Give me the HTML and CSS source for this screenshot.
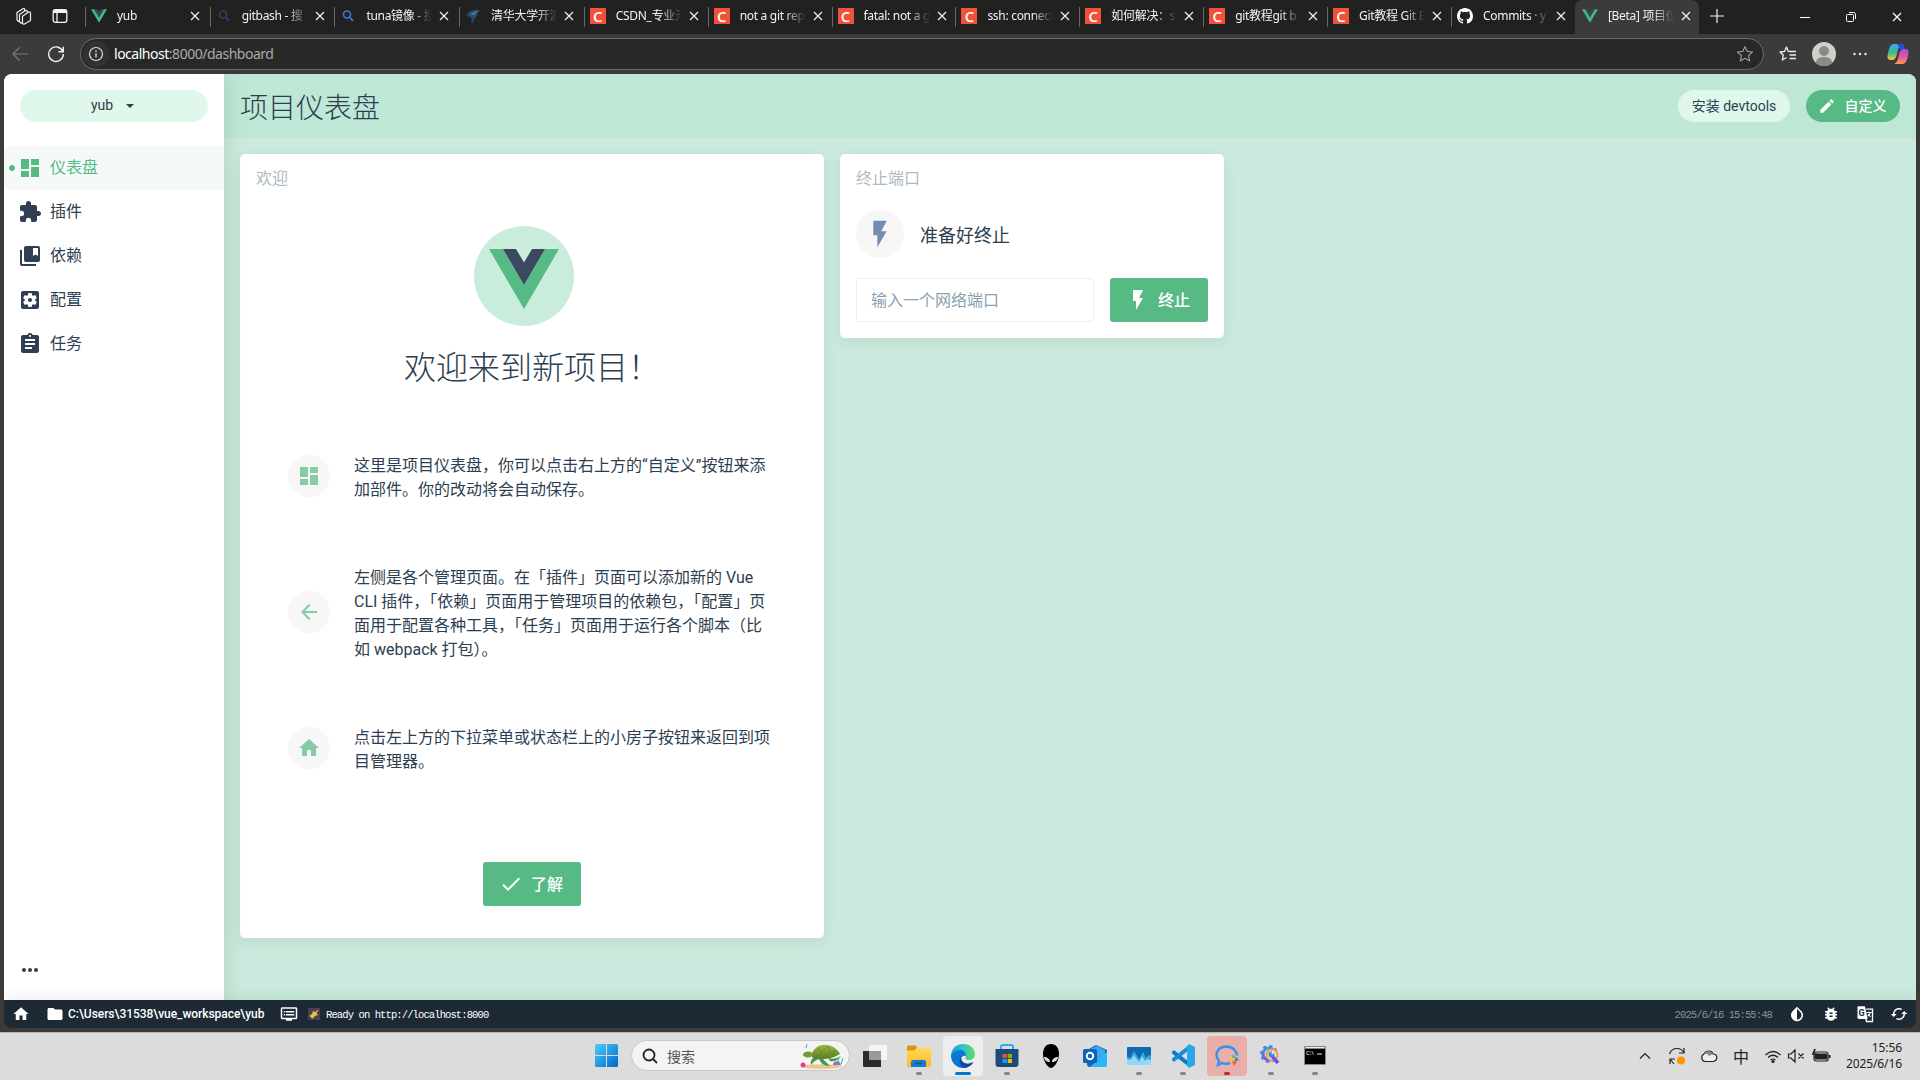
FILE: index.html
```html
<!DOCTYPE html>
<html lang="zh-CN">
<head>
<meta charset="utf-8">
<title>[Beta] 项目仪表盘 - Vue CLI</title>
<link rel="stylesheet" href="styles.css">
</head>
<body>
<svg class="defs" width="0" height="0">
  <defs>
    <linearGradient id="gWin" x1="0" y1="0" x2="1" y2="1"><stop offset="0" stop-color="#4ccdfb"/><stop offset="1" stop-color="#0067c9"/></linearGradient>
    <linearGradient id="gEdge" x1="0" y1="0" x2="1" y2="0"><stop offset="0" stop-color="#1a9be0"/><stop offset=".5" stop-color="#2cc5c8"/><stop offset="1" stop-color="#64dd5b"/></linearGradient>
    <linearGradient id="gCop" x1="0" y1="0" x2="0" y2="1"><stop offset="0" stop-color="#35a8f5"/><stop offset=".55" stop-color="#3fb78e"/><stop offset="1" stop-color="#f3cf2c"/></linearGradient>
    <linearGradient id="gCop2" x1="0" y1="0" x2="0" y2="1"><stop offset="0" stop-color="#9a55ee"/><stop offset=".5" stop-color="#e255a0"/><stop offset="1" stop-color="#ff9a4a"/></linearGradient>
    <linearGradient id="gFold" x1="0" y1="0" x2="0" y2="1"><stop offset="0" stop-color="#ffd95a"/><stop offset="1" stop-color="#fbb923"/></linearGradient>
    <linearGradient id="gGear" x1="0" y1="0" x2="0" y2="1"><stop offset="0" stop-color="#28a6d8"/><stop offset="1" stop-color="#7d4bf0"/></linearGradient>
    <linearGradient id="gShell" x1="0" y1="0" x2="0" y2="1"><stop offset="0" stop-color="#9fbb3c"/><stop offset="1" stop-color="#567a2b"/></linearGradient>
  </defs>
  <symbol id="vue" viewBox="0 0 70 60"><path fill="#57ba85" d="M0 0h14l21 36L56 0h14L35 60z"/><path fill="#3b4960" d="M14 0h13l8 13.500L43 0h13L35 36z"/></symbol>
  <symbol id="vuetab" viewBox="0 0 70 60"><path fill="#42b883" d="M0 0h14l21 36L56 0h14L35 60z"/><path fill="#35495e" d="M14 0h13l8 13.500L43 0h13L35 36z"/></symbol>
  <symbol id="x" viewBox="0 0 10 10"><path d="M1 1l8 8M9 1L1 9" fill="none" stroke="currentColor" stroke-width="1.200"/></symbol>
  <symbol id="mag" viewBox="0 0 16 16"><circle cx="7" cy="6.500" r="3.500" fill="none" stroke="currentColor" stroke-width="1.600"/><path d="M9.500 9L13 13" stroke="currentColor" stroke-width="1.800"/></symbol>
  <symbol id="dashboard" viewBox="0 0 24 24"><path d="M3 13h8V3H3v10zm0 8h8v-6H3v6zm10 0h8V11h-8v10zm0-18v6h8V3h-8z"/></symbol>
  <symbol id="extension" viewBox="0 0 24 24"><path d="M20.500 11H19V7c0-1.100-.9-2-2-2h-4V3.500C13 2.120 11.880 1 10.500 1S8 2.120 8 3.500V5H4c-1.100 0-1.990.9-1.990 2v3.800H3.500c1.490 0 2.700 1.210 2.700 2.700s-1.210 2.700-2.700 2.700H2V20c0 1.100.9 2 2 2h3.800v-1.500c0-1.490 1.210-2.700 2.700-2.700 1.490 0 2.700 1.210 2.700 2.700V22H17c1.100 0 2-.9 2-2v-4h1.500c1.380 0 2.500-1.120 2.500-2.500S21.880 11 20.500 11z"/></symbol>
  <symbol id="books" viewBox="0 0 24 24"><path d="M4 6H2v14c0 1.100.9 2 2 2h14v-2H4V6z"/><path d="M20 2H8c-1.100 0-2 .9-2 2v12c0 1.100.9 2 2 2h12c1.100 0 2-.9 2-2V4c0-1.100-.9-2-2-2zm0 10l-2.500-1.500L15 12V4h5v8z"/></symbol>
  <symbol id="settings" viewBox="0 0 24 24"><path d="M12 10c-1.100 0-2 .9-2 2s.9 2 2 2 2-.9 2-2-.9-2-2-2zm7-7H5c-1.110 0-2 .9-2 2v14c0 1.100.89 2 2 2h14c1.110 0 2-.9 2-2V5c0-1.100-.89-2-2-2zm-1.750 9c0 .23-.02.46-.05.68l1.480 1.160c.13.11.17.3.08.45l-1.400 2.420c-.09.15-.27.21-.43.15l-1.740-.7c-.36.28-.76.51-1.180.69l-.26 1.850c-.03.17-.18.3-.35.3h-2.800c-.17 0-.32-.13-.35-.29l-.26-1.850c-.43-.18-.82-.41-1.180-.69l-1.740.7c-.16.06-.34 0-.43-.15l-1.400-2.420c-.09-.15-.05-.34.08-.45l1.480-1.160c-.03-.23-.05-.46-.05-.69 0-.23.02-.46.05-.68l-1.480-1.160c-.13-.11-.17-.3-.08-.45l1.400-2.420c.09-.15.27-.21.43-.15l1.740.7c.36-.28.76-.51 1.180-.69l.26-1.850c.03-.17.18-.3.35-.3h2.800c.17 0 .32.13.35.29l.26 1.850c.43.18.82.41 1.180.69l1.740-.7c.16-.06.34 0 .43.15l1.400 2.420c.09.15.05.34-.08.45l-1.480 1.160c.03.23.05.46.05.69z"/></symbol>
  <symbol id="task" viewBox="0 0 24 24"><path d="M19 3h-4.180C14.400 1.840 13.300 1 12 1c-1.300 0-2.400.84-2.820 2H5c-1.100 0-2 .9-2 2v14c0 1.100.9 2 2 2h14c1.100 0 2-.9 2-2V5c0-1.100-.9-2-2-2zm-7 0c.55 0 1 .45 1 1s-.45 1-1 1-1-.45-1-1 .45-1 1-1zm2 14H7v-2h7v2zm3-4H7v-2h10v2zm0-4H7V7h10v2z"/></symbol>
  <symbol id="bolt" viewBox="0 0 24 24"><path d="M7 2v11h3v9l7-12h-4l4-8z"/></symbol>
  <symbol id="edit" viewBox="0 0 24 24"><path d="M3 17.250V21h3.750L17.810 9.940l-3.750-3.750L3 17.250zM20.710 7.040c.39-.39.39-1.020 0-1.410l-2.340-2.340c-.39-.39-1.020-.39-1.410 0l-1.830 1.830 3.750 3.750 1.830-1.830z"/></symbol>
  <symbol id="home" viewBox="0 0 24 24"><path d="M10 20v-6h4v6h5v-8h3L12 3 2 12h3v8z"/></symbol>
  <symbol id="back" viewBox="0 0 24 24"><path d="M20 11H7.830l5.590-5.590L12 4l-8 8 8 8 1.410-1.410L7.830 13H20v-2z"/></symbol>
  <symbol id="check" viewBox="0 0 24 24"><path d="M9 16.170L4.830 12l-1.420 1.410L9 19 21 7l-1.410-1.410z"/></symbol>
  <symbol id="folder" viewBox="0 0 24 24"><path d="M10 4H4c-1.100 0-1.990.9-1.990 2L2 18c0 1.100.9 2 2 2h16c1.100 0 2-.9 2-2V8c0-1.100-.9-2-2-2h-8l-2-2z"/></symbol>
  <symbol id="dvr" viewBox="0 0 24 24"><path d="M21 3H3c-1.100 0-2 .9-2 2v12c0 1.100.9 2 2 2h5v2h8v-2h5c1.100 0 1.990-.9 1.990-2L23 5c0-1.100-.9-2-2-2zm0 14H3V5h18v12zm-2-9H8v2h11V8zm0 4H8v2h11v-2zM7 8H5v2h2V8zm0 4H5v2h2v-2z"/></symbol>
  <symbol id="invert" viewBox="0 0 24 24"><path transform="matrix(-1 0 0 1 24 0)" d="M17.660 7.930L12 2.270 6.340 7.930c-3.120 3.120-3.120 8.190 0 11.310C7.900 20.800 9.950 21.580 12 21.580s4.100-.78 5.660-2.340c3.120-3.120 3.120-8.190 0-11.310zM12 19.590c-1.600 0-3.110-.62-4.240-1.760C6.620 16.690 6 15.190 6 13.590s.62-3.110 1.760-4.240L12 5.100v14.490z"/></symbol>
  <symbol id="bug" viewBox="0 0 24 24"><path d="M20 8h-2.810c-.45-.78-1.070-1.450-1.820-1.960L17 4.410 15.590 3l-2.170 2.170C12.960 5.060 12.490 5 12 5c-.49 0-.96.06-1.410.17L8.410 3 7 4.410l1.620 1.630C7.880 6.550 7.260 7.220 6.810 8H4v2h2.090c-.05.33-.09.66-.09 1v1H4v2h2v1c0 .34.04.67.09 1H4v2h2.810c1.040 1.790 2.970 3 5.190 3s4.150-1.210 5.190-3H20v-2h-2.090c.05-.33.09-.66.09-1v-1h2v-2h-2v-1c0-.34-.04-.67-.09-1H20V8zm-6 8h-4v-2h4v2zm0-4h-4v-2h4v2z"/></symbol>
  <symbol id="cached" viewBox="0 0 24 24"><path d="M19 8l-4 4h3c0 3.310-2.690 6-6 6-1.010 0-1.970-.25-2.800-.7l-1.460 1.460C8.970 19.540 10.430 20 12 20c4.420 0 8-3.580 8-8h3l-4-4zM6 12c0-3.310 2.690-6 6-6 1.010 0 1.970.25 2.800.7l1.460-1.460C15.030 4.460 13.570 4 12 4c-4.420 0-8 3.580-8 8H1l4 4 4-4H6z"/></symbol>
  <symbol id="star" viewBox="0 0 18 18"><path d="M9 1.500l2.200 4.900 5.300.6-4 3.600 1.200 5.300L9 13.200l-4.700 2.700 1.200-5.300-4-3.600 5.300-.6z" fill="none" stroke="currentColor" stroke-width="1.200" stroke-linejoin="round"/></symbol>
</svg>

<header class="tabs">
  <div class="tab-tools">
    <svg width="18" height="18" viewBox="0 0 18 18" fill="#212121" stroke="#f0f0f0" stroke-width="1.200" stroke-linejoin="round"><path d="M2 5.500l6-3.800c1-.6 1.700 0 1.700 1v8L3.500 14.500 2 12.800z"/><path d="M4.500 7.500l6-4c1-.6 1.800 0 1.800 1v8.200l-6.200 3.600-1.600-1.500z"/><path d="M7.500 9.200l6.200-4.200c1-.6 1.800.2 1.800 1v7.500l-6 3.500c-1 .5-2 0-2-1z"/></svg>
    <svg width="16" height="16" viewBox="0 0 16 16" fill="none" stroke="#f3f3f3" stroke-width="1.300"><rect x="1.200" y="1.700" width="13.600" height="12.600" rx="2"/><path d="M5 5v9"/><path d="M1.500 3.500h13" stroke-width="3"/></svg>
  </div>
  <div class="tab wide"><svg class="fav"><use href="#vuetab"/></svg><span>yub</span><svg class="close"><use href="#x"/></svg></div>
  <div class="tab wide"><svg class="fav dim"><use href="#mag"/></svg><span>gitbash - 搜</span><svg class="close"><use href="#x"/></svg></div>
  <div class="tab wide"><svg class="fav blue"><use href="#mag"/></svg><span>tuna镜像 - 搜</span><svg class="close"><use href="#x"/></svg></div>
  <div class="tab wide"><svg class="fav" viewBox="0 0 16 16"><path fill="#2c4964" d="M1 8C3 3 9 1 15 2l-3 4c1 3-2 3-3 6l-2 4c-1-3 0-5-1-7z"/><path fill="#387d91" d="M5 7c2-3 5-4 8-4-2 2-2 3-4 4z"/></svg><span>清华大学开源</span><svg class="close"><use href="#x"/></svg></div>
  <div class="tab"><b class="fav csdn">C</b><span>CSDN_专业开</span><svg class="close"><use href="#x"/></svg></div>
  <div class="tab"><b class="fav csdn">C</b><span>not a git rep</span><svg class="close"><use href="#x"/></svg></div>
  <div class="tab"><b class="fav csdn">C</b><span>fatal: not a g</span><svg class="close"><use href="#x"/></svg></div>
  <div class="tab"><b class="fav csdn">C</b><span>ssh: connect</span><svg class="close"><use href="#x"/></svg></div>
  <div class="tab"><b class="fav csdn">C</b><span>如何解决：s</span><svg class="close"><use href="#x"/></svg></div>
  <div class="tab"><b class="fav csdn">C</b><span>git教程git b</span><svg class="close"><use href="#x"/></svg></div>
  <div class="tab"><b class="fav csdn">C</b><span>Git教程 Git B</span><svg class="close"><use href="#x"/></svg></div>
  <div class="tab"><svg class="fav" viewBox="0 0 16 16"><path fill="#fff" d="M8 0C3.580 0 0 3.580 0 8c0 3.540 2.290 6.530 5.470 7.590.4.070.55-.17.55-.38 0-.19-.01-.82-.01-1.490-2.010.37-2.530-.49-2.690-.94-.09-.23-.48-.94-.82-1.130-.28-.15-.68-.52-.01-.53.63-.01 1.080.58 1.230.82.72 1.210 1.870.87 2.330.66.07-.52.28-.87.51-1.070-1.780-.2-3.640-.89-3.640-3.950 0-.87.31-1.590.82-2.150-.08-.2-.36-1.020.08-2.120 0 0 .67-.21 2.200.82a7.600 7.600 0 014 0c1.530-1.040 2.200-.82 2.200-.82.44 1.100.16 1.920.08 2.120.51.56.82 1.270.82 2.150 0 3.070-1.870 3.750-3.650 3.950.29.25.54.73.54 1.480 0 1.070-.01 1.930-.01 2.200 0 .21.15.46.55.38A8 8 0 0016 8c0-4.420-3.580-8-8-8z"/></svg><span>Commits · y</span><svg class="close"><use href="#x"/></svg></div>
  <div class="tab active"><svg class="fav"><use href="#vuetab"/></svg><span>[Beta] 项目仪</span><svg class="close"><use href="#x"/></svg></div>
  <svg class="plus" viewBox="0 0 14 14"><path d="M7 0v14M0 7h14" stroke="#eee" stroke-width="1.200"/></svg>
  <div class="win">
    <svg viewBox="0 0 10 10"><path d="M0 5.500h10" stroke="#fff"/></svg>
    <svg viewBox="0 0 10 10" fill="none" stroke="#fff"><rect x=".5" y="2.500" width="7" height="7" rx="1"/><path d="M3 .5h4.500a2 2 0 012 2V7"/></svg>
    <svg viewBox="0 0 10 10"><use href="#x"/></svg>
  </div>
</header>

<div class="toolbar">
  <svg class="nav" viewBox="0 0 18 18" fill="none" stroke="#7d7d7d" stroke-width="1.200"><path d="M17 9H2M8.500 2.500L2 9l6.500 6.500"/></svg>
  <svg class="nav" viewBox="0 0 18 18" fill="none" stroke="#eee" stroke-width="1.400"><path d="M15.800 6.500A7.300 7.300 0 1016.300 9M16.300 1.800v4.900h-4.900"/></svg>
  <div class="address">
    <i class="info"><svg width="16" height="16" viewBox="0 0 16 16" fill="none" stroke="#ddd"><circle cx="8" cy="8" r="6.500" stroke-width="1.200"/><path d="M8 7.200v4M8 4.600v1.400" stroke-width="1.400"/></svg></i>
    <p>localhost<em>:8000/dashboard</em></p>
    <svg class="star"><use href="#star"/></svg>
  </div>
  <div class="tools">
    <svg viewBox="0 0 18 18" fill="none" stroke="#eee" stroke-width="1.300" stroke-linejoin="round"><path d="M9.500 7L7.500 2 5.500 6.500 1 7l3.300 3.200L3.300 15l4.200-2.500M10 6.500h7M10.500 10H17M10.500 13.500H17"/></svg>
    <svg class="user" viewBox="0 0 24 24"><circle cx="12" cy="12" r="12" fill="#d1cfcc"/><circle cx="12" cy="9" r="5" fill="#8c8a87"/><path d="M4 21c0-4 3-6 8-6s8 2 8 6a12 12 0 01-16 0z" fill="#8c8a87"/></svg>
    <svg viewBox="0 0 18 18" fill="#eee"><circle cx="3.500" cy="9" r="1.200"/><circle cx="9" cy="9" r="1.200"/><circle cx="14.500" cy="9" r="1.200"/></svg>
    <svg class="user" viewBox="0 0 24 24"><path fill="url(#gCop)" d="M8 2h8c-3 1-4 5-5 10-1 4-2 6-6 6-4 0-4-3-3-7S4 2 8 2z"/><path fill="#274fd0" d="M11 2h5c2 0 2.500 2 3 5h-4c-2 0-2-3-4-5z"/><path fill="url(#gCop2)" d="M16 22H8c3-1 4-5 5-10 1-4 2-5 6-5 4 0 4 3 3 7s-2 8-6 8z"/></svg>
  </div>
</div>

<div class="frame">
<div class="page">
  <div class="app">
    <aside class="side">
      <div class="project">yub<i></i></div>
      <nav>
        <a class="on"><svg><use href="#dashboard"/></svg>仪表盘</a>
        <a><svg><use href="#extension"/></svg>插件</a>
        <a><svg><use href="#books"/></svg>依赖</a>
        <a><svg><use href="#settings"/></svg>配置</a>
        <a><svg><use href="#task"/></svg>任务</a>
      </nav>
      <svg class="more" viewBox="0 0 24 24"><circle cx="6" cy="12" r="2"/><circle cx="12" cy="12" r="2"/><circle cx="18" cy="12" r="2"/></svg>
    </aside>
    <main>
      <div class="head">
        <h1>项目仪表盘</h1>
        <button class="pill">安装 devtools</button>
        <button class="pill primary"><svg><use href="#edit"/></svg>自定义</button>
      </div>
      <div class="widgets">
        <section class="card welcome">
          <h2>欢迎</h2>
          <div class="logo"><svg><use href="#vue"/></svg></div>
          <h3>欢迎来到新项目！</h3>
          <div class="tips">
            <div class="tip two"><i><svg><use href="#dashboard"/></svg></i><p>这里是项目仪表盘，你可以点击右上方的“自定义”按钮来添<br>加部件。你的改动将会自动保存。</p></div>
            <div class="tip four"><i><svg><use href="#back"/></svg></i><p>左侧是各个管理页面。在「插件」页面可以添加新的 Vue<br>CLI 插件，「依赖」页面用于管理项目的依赖包，「配置」页<br>面用于配置各种工具，「任务」页面用于运行各个脚本（比<br>如 webpack 打包）。</p></div>
            <div class="tip two"><i><svg><use href="#home"/></svg></i><p>点击左上方的下拉菜单或状态栏上的小房子按钮来返回到项<br>目管理器。</p></div>
          </div>
          <button class="btn"><svg><use href="#check"/></svg>了解</button>
        </section>
        <section class="card kill">
          <h2>终止端口</h2>
          <div class="ready"><i><svg><use href="#bolt"/></svg></i>准备好终止</div>
          <div class="port"><input placeholder="输入一个网络端口"><button class="btn"><svg><use href="#bolt"/></svg>终止</button></div>
        </section>
      </div>
    </main>
  </div>
  <footer class="status">
    <svg class="s-home"><use href="#home"/></svg>
    <svg class="s-folder"><use href="#folder"/></svg>
    <b>C:\Users\31538\vue_workspace\yub</b>
    <svg class="s-log"><use href="#dvr"/></svg>
    <svg class="s-spark" viewBox="0 0 12 12"><rect width="12" height="12" fill="#4a3f52"/><path d="M11 1L8.500 5 10 7 7 8l-3 3-1-2-2-1 3-2 1-3 2 1z" fill="#e9c23c"/></svg>
    <code>Ready on http://localhost:8000</code>
    <time>2025/6/16 15:55:48</time>
    <div class="s-tools">
      <svg><use href="#invert"/></svg>
      <svg><use href="#bug"/></svg>
      <svg viewBox="0 0 24 24"><path d="M3 1.500h9l3.500 17H4a2 2 0 01-2-2v-14z"/><path d="M13.500 5.500H22V22h-8l-1-4" fill="none" stroke="#fff" stroke-width="1.800"/><path d="M14 10h7M17.500 8.500V10M19 10c0 2-2 4-3.500 5M16 12l3.500 4" fill="none" stroke="#fff" stroke-width="1.400"/><text x="3.200" y="14.500" font-size="12" font-weight="700" fill="#1d2935">G</text></svg>
      <svg><use href="#cached"/></svg>
    </div>
  </footer>
</div>
</div>

<div class="taskbar">
  <div class="apps">
    <svg class="start" viewBox="0 0 23 23" fill="url(#gWin)"><path d="M0 1.500Q0 0 1.500 0H11v11H0zM12 0h9.500Q23 0 23 1.500V11H12zM0 12h11v11H1.500Q0 23 0 21.500zM12 12h11v9.500q0 1.500-1.500 1.500H12z"/></svg>
    <div class="search">
      <svg width="16" height="16" viewBox="0 0 16 16" fill="none" stroke="#222" stroke-width="1.800"><circle cx="7" cy="7" r="5.500"/><path d="M11 11l4 4"/></svg>
      <span>搜索</span>
      <svg width="44" height="26" viewBox="0 0 44 26"><ellipse cx="22" cy="23.500" rx="20" ry="2.300" fill="#f0c48d"/><path d="M28 15c4 1 8 1 13-2-2 4-7 6-11 5zM12 12c3 3 8 3 11 4l7 7c-7 0-9-3-11-7-3 1-6 3-8 6-1-4 1-6 3-8z" fill="#3f9c55"/><path d="M11 12c3-7 8-11 16-10 7 1 11 5 13 9-8 5-18 6-27 4z" fill="url(#gShell)"/><path d="M18 5l4 4 6-6 3 7 5-3M22 9l-3 6M31 10l-2 6" stroke="#6d8e2d" fill="none"/><ellipse cx="8" cy="11.500" rx="5" ry="3" fill="#719c36"/><circle cx="3" cy="22" r="2.500" fill="#e43f9c"/><path d="M33 22c0-5 7-5 8 0z" fill="#9a6ac8"/><path d="M39 21l-1-5M41 21l2-6M6 5l1-4" stroke="#36b49b"/></svg>
    </div>
    <div class="app-icon"><svg viewBox="0 0 24 24"><rect x="6" y="1" width="18" height="15" rx="1" fill="#f5f5f5"/><path d="M0 7h18v16H1.500Q0 23 0 21.500z" fill="#2b2b2b"/><path d="M6 7h12v9H6z" fill="#999"/></svg></div>
    <div class="app-icon run"><svg viewBox="0 0 24 24"><path d="M0 3q0-1.500 1.500-1.500h7L10 4v3H0z" fill="#d9950b"/><path d="M0 6.500h7L10 4h13q1 0 1 1v16q0 2-2 2H2q-2 0-2-2z" fill="url(#gFold)"/><path d="M4 23v-5q0-2 2-2h11q2 0 2 2v5z" fill="#1779c9"/><path d="M8 19.500h7" stroke="#0a559a" stroke-width="1.500"/></svg></div>
    <div class="app-icon run current"><svg viewBox="0 0 24 24"><path d="M0 12C0 5 5 0 12 0c8 0 12 6 12 10 0 4-3 6-6 6-4 0-4-2-3-3 0-4-3-5-6-5-4 0-7 2-9 5z" fill="url(#gEdge)"/><path d="M0 12c2-4 5-6 9-6 4 0 6 3 6 6-1-1-5 0-5 3 0 4 5 7 12 3-2 4-6 6-10 6C5 24 0 18 0 12z" fill="#0a78d4"/><path d="M10 13c-3 4-1 10 4 11 4-1 7-3 8.500-6C15 22 10 18 10 13z" fill="#104a98"/></svg></div>
    <div class="app-icon run"><svg viewBox="0 0 24 24"><path d="M6 6V3q0-2 2-2h8q2 0 2 2v3" fill="none" stroke="#27aee8" stroke-width="2"/><path d="M.5 5h23v15q0 3-3 3h-17q-3 0-3-3z" fill="#1c4c7d"/><path fill="#f25022" d="M7.500 10H12v4H7.500z"/><path fill="#7fba00" d="M12.800 10H17v4h-4.200z"/><path fill="#00a4ef" d="M7.500 15H12v4H7.500z"/><path fill="#ffb900" d="M12.800 15H17v4h-4.200z"/></svg></div>
    <div class="app-icon"><svg viewBox="0 0 24 24"><path d="M12 0c5 0 8 4 8 10 0 7-5 14-8 14S4 17 4 10C4 4 7 0 12 0z"/><path d="M5 13c3 0 6 2 6 5-3 0-6-2-6-5zM19 13c-3 0-6 2-6 5 3 0 6-2 6-5z" fill="#ddd"/></svg></div>
    <div class="app-icon"><svg viewBox="0 0 24 24"><path d="M4 6l9-5 11 5v14q0 3-3 3H7q-3 0-3-3z" fill="#1565b9"/><path d="M7 5l7-3 8 4v7l-8 4-7-5z" fill="#38a8ef"/><path d="M24 8v13q0 2-2 2H7z" fill="#29b8f3"/><rect y="5" width="14" height="14" rx="1.500" fill="#0b63bd"/><circle cx="7" cy="12" r="3.200" fill="none" stroke="#fff" stroke-width="2"/></svg></div>
    <div class="app-icon run"><svg viewBox="0 0 24 24"><rect y="3" width="24" height="18" rx="1" fill="#91d8fa"/><path d="M0 4q0-1 1-1h22q1 0 1 1v9l-3-1-2 3-3-6-4 7-4-7-4 6-4-2z" fill="#0f6bb0"/><path d="M0 13l3 1 4-7 5 9 4-8 3 6 3-3 2 1v4l-4-1-2 2-3-5-3 6-5-7-4 5-3-1z" fill="#36a6dc"/></svg></div>
    <div class="app-icon run"><svg viewBox="0 0 24 24"><path d="M1 8l2-2 15 12v5L1 9.500z" fill="#0879c4"/><path d="M1 16l2 2L18 6V1L1 14.500z" fill="#168bd7"/><path d="M18 0l6 3v18l-6 3-2-2V2z" fill="#2aa6ef"/></svg></div>
    <div class="app-icon run alert"><svg viewBox="0 0 24 24"><path d="M15 19c-3 1-6 1-8 0l-4 2 1-4C-1 11 2 3 11 2.500c7 0 11 5 11 9" fill="none" stroke="#3393f0" stroke-width="2.400"/><path d="M14 14l4-2-1 5z" fill="#ffc20e"/><path d="M18 10l3 4-4 0z" fill="#6bc04b"/><path d="M24 16l-5 2 2-5z" fill="#2483e2"/><path d="M19 22l-2-5 5 1z" fill="#fb6516"/></svg></div>
    <div class="app-icon run"><svg viewBox="0 0 24 24"><circle cx="10" cy="10" r="6" fill="none" stroke="url(#gGear)" stroke-width="3"/><circle cx="10" cy="10" r="8" fill="none" stroke="#4b7ded" stroke-width="2" stroke-dasharray="3.140 3.140"/><circle cx="13" cy="11" r="5.500" fill="#dce6ee" stroke="#f69b3b" stroke-width="2"/><path d="M12 11l7 8" stroke="#6a52ea" stroke-width="3.500"/><circle cx="12.500" cy="10.500" r="3" fill="#3f86e0"/><path d="M13 10l2-3" stroke="#dce6ee" stroke-width="2"/></svg></div>
    <div class="app-icon run"><svg viewBox="0 0 24 24"><rect x="1" y="2" width="22" height="19" rx="1" fill="#888"/><path d="M2 5h20v15H2z"/><text x="3" y="11" font-size="6" fill="#fff">C:\</text><path d="M14 10h5M2.500 3.500h19" stroke="#eee"/></svg></div>
  </div>
  <div class="tray">
    <svg viewBox="0 0 20 20"><path d="M5 12.500l5-5 5 5"/></svg>
    <svg viewBox="0 0 20 20"><path d="M2.500 8C4 4 6.500 2.500 10 2.500S15.500 4 17 7M17 2v5h-5M3 18v-5h5M3 13l4 5"/><circle cx="14" cy="14.500" r="4" fill="#ff9800" stroke="none"/></svg>
    <svg viewBox="0 0 20 20"><path d="M6 15.500a4 4 0 01-1-7.500C7 4 13 4 14 8c5 0 5 7 0 7.500z" fill="#eee"/><path d="M3 10c2-3 5-3 7 0l4-2C12 4 7 4 5 8z" fill="#888" stroke="none"/></svg>
    <span>中</span>
    <svg class="wifi" viewBox="0 0 20 20"><path d="M2.500 9q7.500-7 15 0M5 11.500q5-4.500 10 0M7.500 14q2.500-2 5 0"/><circle cx="10" cy="15.500" r="1" fill="#222"/></svg>
    <svg viewBox="0 0 20 20"><path d="M2.500 8H5l4-4v12l-4-4H2.500zM12.500 7.500l5 5M17.500 7.500l-5 5"/></svg>
    <svg viewBox="0 0 20 20"><rect x="3" y="6" width="14" height="9" rx="2"/><path d="M6 8h9.500v5H4.500z" fill="#222"/><path d="M18.500 9v3" stroke-width="2"/><path d="M4 3L2 8h3l-1 4" stroke-width="1.700"/></svg>
    <div class="clock">15:56<br>2025/6/16</div>
  </div>
</div>
</body>
</html>
```

FILE: styles.css
```css
* { box-sizing: border-box; }
body { margin: 0; width: 1920px; height: 1080px; overflow: hidden; display: flex; flex-direction: column; background: #3b3a39; font-family: Roboto, "Noto Sans CJK SC", sans-serif; color: #2c3e50; }
.defs { position: absolute; }
svg { display: block; flex: none; }
h1, h2, h3, p { margin: 0; font-weight: 400; white-space: nowrap; }
button { border: 0; font-family: inherit; }
i, em { font-style: normal; }

/* browser tabs */
.tabs { height: 34px; flex: none; display: flex; background: #212121; font: 12px "Noto Sans", "Noto Sans CJK SC", sans-serif; color: #f2f2f2; letter-spacing: -.3px; }
.tab-tools { width: 85px; flex: none; display: flex; align-items: center; gap: 19px; padding: 0 0 2px 15px; }
.tab { width: 123.900px; flex: none; display: flex; align-items: center; padding: 0 0 2px 6px; background: linear-gradient(#666, #666) 0 7px / 1px 20px no-repeat; }
.tab.wide { width: 124.700px; }
.fav { width: 16px; height: 16px; margin-right: 10px; }
.fav.dim { color: #2c426b; }
.fav.blue { color: #3c79dc; }
.csdn { flex: none; background: #f15138; font: 600 15px/16px "Open Sans", sans-serif; text-align: center; color: #fff; letter-spacing: 0; }
.tab span { width: 66px; flex: none; height: 18px; line-height: 18px; overflow: hidden; white-space: nowrap; -webkit-mask-image: linear-gradient(90deg, #000 68%, transparent); mask-image: linear-gradient(90deg, #000 68%, transparent); }
.close { width: 10px; height: 10px; margin-left: 7px; }
.tab.active { background: #3b3b3b; border-radius: 8px 8px 0 0; padding-left: 7px; }
.plus { width: 14px; height: 14px; margin: 9px 0 0 11px; }
.win { margin-left: auto; display: flex; gap: 36px; padding: 12px 18px 0 0; color: #fff; }
.win svg { width: 10px; height: 10px; }

/* address row */
.toolbar { height: 40px; flex: none; display: flex; align-items: center; background: #3b3b3b; padding-left: 11px; }
.nav { width: 18px; height: 18px; margin-right: 18px; }
.nav + .nav { margin-right: 15px; }
.address { width: 1684px; height: 32px; border: 1px solid #6b6b6b; border-radius: 16px; background: #282828; display: flex; align-items: center; padding: 0 9px 0 2px; color: #fff; font: 14px/20px "Noto Sans", sans-serif; letter-spacing: -.48px; }
.address p { padding-bottom: 1px; }
.info { width: 26px; height: 26px; border-radius: 13px; background: #323232; display: grid; place-items: center; margin-right: 5px; }
.address em { color: #aaa; }
.star { width: 18px; height: 18px; margin-left: auto; color: #999; }
.tools { display: flex; align-items: center; gap: 15px; padding-left: 15px; }
.tools svg { width: 18px; height: 18px; }
.tools .user { width: 24px; height: 24px; }
.tools .user:last-child { margin-left: 2px; }

/* page */
.frame { height: 958px; flex: none; padding: 0 4px 4px; background: #3b3a39; }
.page { height: 954px; border-radius: 8px; overflow: hidden; display: flex; flex-direction: column; }
.app { height: 926px; display: flex; background: #c9eadc; }
.side { width: 220px; background: #fff; display: flex; flex-direction: column; padding: 16px 0; box-shadow: 0 0 20px rgba(0,0,0,.12); z-index: 1; }
.project { height: 32px; margin: 0 16px 24px; border-radius: 16px; background: #e0f8ec; display: flex; align-items: center; justify-content: center; gap: 13px; padding: 0 3px 2px 0; font-size: 14px; }
.project i { border: 4px solid transparent; border-top-color: #2c3e50; border-bottom: 0; margin-top: 2px; }
nav a { height: 44px; display: flex; align-items: center; gap: 8px; padding: 0 14px 4px; font-size: 16px; }
nav svg { width: 24px; height: 24px; fill: #2f3e50; margin-top: 4px; }
nav a.on { color: #57ba85; background: radial-gradient(circle at 8px 22px, #57ba85 2.600px, transparent 3.200px), #f5faf9; }
nav a.on svg { fill: #57ba85; }
.more { width: 24px; height: 24px; margin: auto 0 2px 14px; fill: #2c3e50; }
main { flex: 1; min-width: 0; }
.head { height: 64px; display: flex; align-items: center; gap: 16px; padding: 0 16px; background: #bee7d5; }
h1 { margin-right: auto; padding-top: 6px; font-size: 28px; line-height: 40px; font-weight: 300; }
.pill { height: 32px; border-radius: 16px; padding: 0 0 2px; width: 112px; display: flex; align-items: center; justify-content: center; gap: 9px; font-size: 14px; white-space: nowrap; color: #2c3e50; background: #e0f8ec; }
.pill.primary { width: 94px; padding-right: 2px; background: #57ba85; color: #fff; font-weight: 500; }
.pill svg { width: 18px; height: 18px; fill: #fff; margin-top: 2px; }
.widgets { display: flex; align-items: flex-start; gap: 16px; padding: 16px; }
.card { background: #fff; border-radius: 5px; box-shadow: 0 4px 16px rgba(0,0,0,.07); }
.card h2 { height: 48px; padding-left: 16px; font-size: 16px; line-height: 49px; color: #aebac2; }
.welcome { width: 584px; height: 784px; display: flex; flex-direction: column; align-items: center; }
.welcome h2 { align-self: stretch; }
.logo { width: 100px; height: 100px; margin: 24px 16px 0 0; border-radius: 50%; background: #c9ecdb; display: flex; justify-content: center; padding-top: 23px; }
.logo svg { width: 70px; height: 60px; }
h3 { margin-top: 19px; font-size: 32px; line-height: 46px; font-weight: 300; }
.tips { align-self: stretch; padding: 61px 0 0 48px; display: flex; flex-direction: column; gap: 64px; }
.tip { display: flex; align-items: center; gap: 24px; font-size: 16px; line-height: 24px; }
.tip p { margin: 4px 0 0; }
.tip.two { height: 48px; }
.tips .tip { margin-bottom: 0; }
.tips { gap: 64px; }
.tip.four { height: 96px; }
.tip i { width: 42px; height: 42px; border-radius: 50%; background: #f7f7f7; display: grid; place-items: center; }
.tip svg { width: 24px; height: 24px; fill: #85cca6; }
.btn { width: 98px; height: 44px; border-radius: 3px; background: #57ba85; color: #fff; padding: 0 0 2px 16px; display: flex; align-items: center; gap: 8px; font-size: 16px; font-weight: 500; white-space: nowrap; }
.btn svg { width: 24px; height: 24px; fill: #fff; margin-top: 2px; }
.welcome > .btn { margin-top: auto; margin-bottom: 32px; }
.kill { width: 384px; height: 184px; }
.ready { height: 48px; margin: 8px 16px 20px; display: flex; align-items: center; gap: 16px; font-size: 18px; }
.ready i { width: 48px; height: 48px; border-radius: 50%; background: #f7f7f7; display: grid; place-items: center; }
.ready svg { width: 32px; height: 32px; fill: #748cb0; }
.port { display: flex; gap: 16px; padding: 0 16px; }
.port input { width: 238px; height: 44px; border: 1px solid #e0f5ee; border-radius: 3px; padding: 0 14px; font: 16px Roboto, "Noto Sans CJK SC", sans-serif; outline: 0; }
.port input::placeholder { color: #8aa1b2; }

/* status line */
.status { height: 28px; flex: none; display: flex; align-items: center; background: #1d2935; color: #fff; position: relative; z-index: 2; box-shadow: 0 0 16px rgba(0,0,0,.1); padding-left: 8px; }
.status svg { fill: #fff; width: 18px; height: 18px; }
.status b { font-size: 12px; font-weight: 500; width: 196px; white-space: nowrap; letter-spacing: -.05px; }
.status .s-folder { margin: 0 4px 0 16px; }
.status .s-log { margin: 0 10px 0 16px; }
.status .s-spark { width: 12px; height: 12px; margin-right: 6px; }
.status code, .status time { font: 10.500px "Liberation Mono", monospace; letter-spacing: -.89px; white-space: nowrap; padding-top: 1px; }
.status time { margin-left: auto; margin-right: 16px; color: #8c9298; }
.s-tools { display: flex; gap: 16px; padding-right: 8px; }

/* taskbar */
.taskbar { height: 48px; background: #dcdcdc; border-top: 1px solid #b4b4b4; display: flex; align-items: center; padding-bottom: 2px; font-family: "Noto Sans", "Noto Sans CJK SC", sans-serif; color: #222; }
.apps { display: flex; align-items: center; width: 1340px; padding-left: 595px; flex: none; }
.start { width: 23px; height: 23px; margin-right: 13px; }
.search { width: 219px; flex: none; height: 31px; margin-right: 3px; border: 1px solid #c8c8c8; border-radius: 16px; background: #f4f4f4; display: flex; align-items: center; gap: 9px; padding: 0 5px 0 10px; font-size: 14px; color: #555; }
.search svg:last-child { margin-left: auto; }
.app-icon { width: 40px; height: 40px; margin: 0 2px; border-radius: 4px; display: grid; place-items: center; flex: none; position: relative; }
.app-icon svg { width: 24px; height: 24px; }
.app-icon.run::after { content: ""; position: absolute; width: 6px; height: 3px; border-radius: 2px; background: #858585; left: 17px; bottom: 1px; }
.app-icon.current { background: #ededed; }
.app-icon.current::after { width: 16px; left: 12px; background: #0078d4; }
.app-icon.alert { background: #e9adaa; }
.app-icon.alert::after { background: #c42b1c; }
.tray { margin-left: auto; display: flex; align-items: center; gap: 12px; padding-right: 18px; }
.tray svg { width: 20px; height: 20px; fill: none; stroke: #222; stroke-width: 1.200; }
.tray span { width: 20px; font-size: 16px; text-align: center; }
.tray svg.wifi { margin-right: -9px; }
.tray svg.wifi + svg { margin-right: -7px; }
.clock { width: 59px; text-align: right; font-size: 12px; line-height: 16px; letter-spacing: -.1px; white-space: nowrap; }
```
